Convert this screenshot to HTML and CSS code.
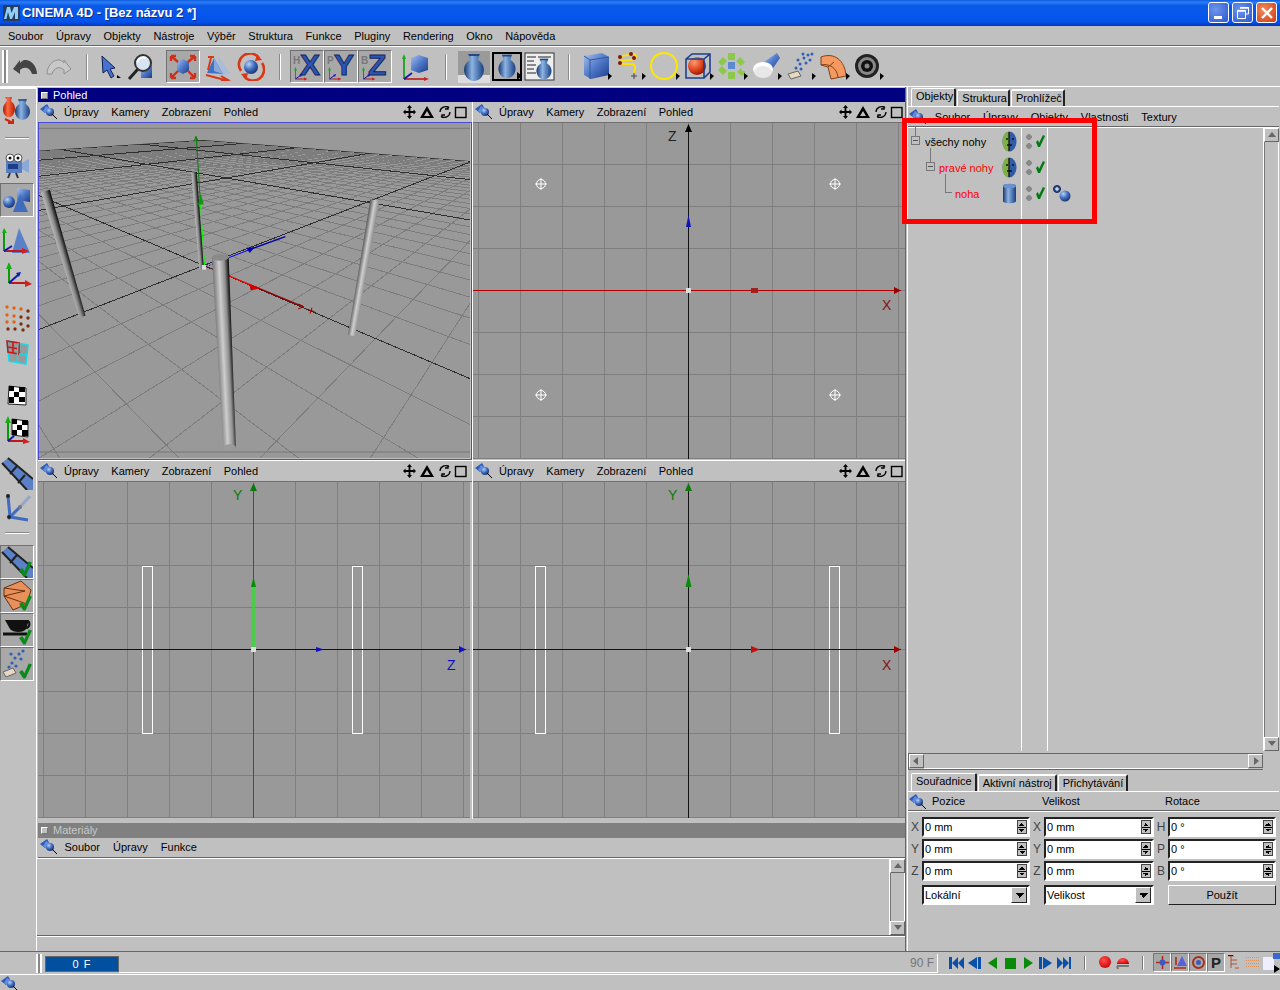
FILE: index.html
```html
<!DOCTYPE html>
<html lang="cs">
<head>
<meta charset="utf-8">
<title>CINEMA 4D - [Bez názvu 2 *]</title>
<link rel="stylesheet" href="styles.css">
</head>
<body>
<svg class="defs" aria-hidden="true">
  <defs>
    <linearGradient id="gBlue" x1="0" y1="0" x2="1" y2="1"><stop offset="0" stop-color="#a8c0ec"/><stop offset=".5" stop-color="#4f78c8"/><stop offset="1" stop-color="#1d3c86"/></linearGradient>
    <linearGradient id="gVase" x1="0" y1="0" x2="1" y2="0"><stop offset="0" stop-color="#16386f"/><stop offset=".4" stop-color="#8db4e4"/><stop offset="1" stop-color="#173f80"/></linearGradient>
    <linearGradient id="gRed" x1="0" y1="0" x2="1" y2="0"><stop offset="0" stop-color="#a81808"/><stop offset=".4" stop-color="#ff6a3c"/><stop offset="1" stop-color="#b01c08"/></linearGradient>
    <radialGradient id="gBall" cx=".35" cy=".3" r=".8"><stop offset="0" stop-color="#b8d0f4"/><stop offset=".5" stop-color="#3f6cc0"/><stop offset="1" stop-color="#12285e"/></radialGradient>
    <radialGradient id="gRedBall" cx=".35" cy=".3" r=".8"><stop offset="0" stop-color="#ff9a70"/><stop offset=".6" stop-color="#d83a14"/><stop offset="1" stop-color="#801004"/></radialGradient>
    <radialGradient id="gRec" cx=".4" cy=".35" r=".7"><stop offset="0" stop-color="#ff5050"/><stop offset="1" stop-color="#d00000"/></radialGradient>
    <linearGradient id="gLegDark" x1="0" y1="0" x2="1" y2="0"><stop offset="0" stop-color="#bdbdbd"/><stop offset=".45" stop-color="#8a8a8a"/><stop offset="1" stop-color="#000"/></linearGradient>
    <linearGradient id="gLegLight" x1="0" y1="0" x2="1" y2="0"><stop offset="0" stop-color="#555"/><stop offset=".5" stop-color="#cfcfcf"/><stop offset="1" stop-color="#8a8a8a"/></linearGradient>
    <linearGradient id="gLegFront" x1="0" y1="0" x2="1" y2="0"><stop offset="0" stop-color="#777"/><stop offset=".4" stop-color="#cdcdcd"/><stop offset=".72" stop-color="#8f8f8f"/><stop offset="1" stop-color="#000"/></linearGradient>
    <pattern id="pGrid" x="215" y="167" width="42" height="42" patternUnits="userSpaceOnUse"><path d="M.5 0V42M0 .5H42" stroke="#7f7f7f" fill="none"/></pattern>

    <symbol id="pin" viewBox="0 0 18 16"><path d="M0 5 7 0 10 5 5 9Z" fill="#2f5bb5"/><path d="M6 2 11 5 7 10 3 7Z" fill="#5f8be0"/><circle cx="10" cy="8" r="4" fill="url(#gBall)"/><path d="M12 10 17 15" stroke="#000"/></symbol>
    <symbol id="vase" viewBox="0 0 26 30"><path d="M7 1H19L17 7C22 10 24 15 23 20 22 25 18 29 13 29 8 29 4 25 3 20 2 15 4 10 9 7Z" fill="url(#gVase)"/><path d="M7 1H19L18 3H8Z" fill="#23497f"/></symbol>
    <symbol id="check" viewBox="0 0 14 16"><path d="M1 9 4 7 6 10 10 1 13 2 7 15H5Z" fill="#0a8a1a"/></symbol>
    <symbol id="checksmall" viewBox="0 0 10 14"><path d="M1 8 3 6 4 9 8 1 10 2 5 13H3Z" fill="#007a10"/></symbol>
    <symbol id="head" viewBox="0 0 15 21"><ellipse cx="7.500" cy="10.500" rx="7" ry="10" fill="#2f5ba8"/><path d="M7 .5C3 .5.5 5 .5 10.500S3 20.500 7 20.500Z" fill="#7fb040"/><path d="M7 1V20M4 8h2M10 8h2M5 14h5" stroke="#111" stroke-width="1.300"/></symbol>
    <symbol id="vpicons" viewBox="0 0 64 14"><path d="M6.500 0 9 3H7.400V6.100H10.500V4.500L13 7 10.500 9.500V7.900H7.400V11H9L6.500 14 4 11H5.600V7.900H2.500V9.500L0 7 2.500 4.500V6.100H5.600V3H4Z" fill="#000"/><path d="M24 1 31 13H17ZM24 6 21 11H27Z" fill="#000" fill-rule="evenodd"/><path d="M37 7A5.500 5.500 0 0 1 46 3M45 1V4H42M47 7A5.500 5.500 0 0 1 38 11M39 13V10H42" stroke="#000" fill="none" stroke-width="1.300"/><rect x="52.500" y="2.500" width="10.500" height="10" fill="none" stroke="#000" stroke-width="1.400"/></symbol>
    <symbol id="ax" viewBox="0 0 28 28"><path d="M4 24V4" stroke="#0a9a0a" stroke-width="2"/><path d="M1 7 4 0 7 7Z" fill="#12b012"/><path d="M4 24H24" stroke="#c01818" stroke-width="2"/><path d="M21 21 28 24 21 27Z" fill="#d02020"/><path d="M4 24 14 17" stroke="#0a1ab0" stroke-width="2"/><path d="M11 16 17 14 15 20Z" fill="#0a1ab0"/></symbol>
  </defs>
</svg>
<div class="app">
  <header class="titlebar">
    <svg class="logo" width="17" height="16" viewBox="0 0 17 16"><rect width="17" height="16" fill="#2a3a5a"/><path d="M1 14 4 2H7L8.500 8 11 2H15V14H12V7L9 14H7L5 7 3.500 14Z" fill="#8ed0f8"/></svg>
    <span class="title-text">CINEMA 4D - [Bez názvu 2 *]</span>
    <div class="winbtns">
      <div class="winbtn"><svg width="18" height="18" viewBox="0 0 18 18"><rect x="4" y="12" width="8" height="3" fill="#fff"/></svg></div>
      <div class="winbtn"><svg width="18" height="18" viewBox="0 0 18 18"><path d="M6.500 3.500H14.500V10H12M3.500 6.500H11.500V14.500H3.500Z" fill="none" stroke="#fff"/><path d="M6 4H15M3 7H12" stroke="#fff" stroke-width="1.500"/></svg></div>
      <div class="winbtn close"><svg width="18" height="18" viewBox="0 0 18 18"><path d="M4 4 14 14M14 4 4 14" stroke="#fff" stroke-width="2.400"/></svg></div>
    </div>
  </header>
  <nav class="menubar">
    <span>Soubor</span><span>Úpravy</span><span>Objekty</span><span>Nástroje</span><span>Výběr</span><span>Struktura</span><span>Funkce</span><span>Pluginy</span><span>Rendering</span><span>Okno</span><span>Nápověda</span>
  </nav>
  <div class="toolbar">
    <div class="grip"></div>
    <div class="t"><svg width="26" height="20" viewBox="0 0 26 20"><path d="M1 12 8 17V13C12 9 18 10 20 17H25C25 8 18 2 12 3 10 4 9 5 8 6V3Z" fill="#444"/></svg></div>
    <div class="t"><svg width="26" height="20" viewBox="0 0 26 20"><path d="M25 12 18 17V13C14 9 8 10 6 17H1C1 8 8 2 14 3 16 4 17 5 18 6V3Z" fill="#c8c8c8" stroke="#8f8f8f"/></svg></div>
    <div class="sep w20"></div>
    <div class="t w30"><svg class="more" width="20" height="24" viewBox="0 0 20 24"><path d="M1 1 14 13 9 14 13 21 10 23 6 15 2 18Z" fill="#4472d8" stroke="#10204a"/><path d="M16 20 20 23H16Z" fill="#000"/></svg></div>
    <div class="t w30"><svg width="28" height="28" viewBox="0 0 28 28"><path d="M14 12 25 12V25H14Z" fill="url(#gBlue)"/><path d="M11 16 2 26" stroke="#222" stroke-width="3"/><circle cx="16" cy="10" r="8" fill="#d8e4f4" stroke="#333" stroke-width="2"/><path d="M10 9C12 5 16 4 19 5" stroke="#fff" stroke-width="2" fill="none"/></svg></div>
    <div class="blank w10"></div>
    <div class="t on"><svg width="30" height="28" viewBox="0 0 30 28"><path d="M9 9 15 6 21 9V18L15 21 9 18Z" fill="url(#gBlue)"/><path d="M10 9 3 3M3 3H8M3 3V8M20 9 27 3M27 3H22M27 3V8M10 18 3 25M3 25H8M3 25V20M20 18 27 25M27 25H22M27 25V20" stroke="#d03018" stroke-width="2.400" fill="none"/></svg></div>
    <div class="t"><svg width="28" height="28" viewBox="0 0 28 28"><path d="M15 3 27 20 16 24Z" fill="#a9bcd8"/><path d="M11 5 20 21 4 20Z" fill="#3f72c4"/><path d="M11 5 20 21 11 18Z" fill="#88a8dc"/><path d="M5 17 8 5M5 4H11M3 22 22 27M18 23 25 27 18 28" stroke="#d83818" stroke-width="2" fill="none"/></svg></div>
    <div class="t"><svg width="28" height="28" viewBox="0 0 28 28"><circle cx="14" cy="14" r="7" fill="url(#gBall)"/><path d="M4 18A11 11 0 0 1 22 5M25 10A11 11 0 0 1 7 23" stroke="#d83818" stroke-width="2.600" fill="none"/><path d="M20 1 25 7 18 8ZM9 27 4 21 11 20Z" fill="#d83818"/></svg></div>
    <div class="sep w22"></div>
    <div class="t on axisbtn"><span class="mini">H</span><span class="big">X</span><svg class="axmini" width="15" height="14" viewBox="0 0 28 28"><use href="#ax"/></svg></div>
    <div class="t on axisbtn"><span class="mini">P</span><span class="big">Y</span><svg class="axmini" width="15" height="14" viewBox="0 0 28 28"><use href="#ax"/></svg></div>
    <div class="t on axisbtn"><span class="mini">B</span><span class="big">Z</span><svg class="axmini" width="15" height="14" viewBox="0 0 28 28"><use href="#ax"/></svg></div>
    <div class="blank w6"></div>
    <div class="t"><svg width="30" height="30" viewBox="0 0 30 30"><path d="M11 6 19 3 28 6V18L19 21 11 18Z" fill="url(#gBlue)"/><path d="M4 27V5" stroke="#0a9a0a" stroke-width="1.600"/><path d="M2 7 4 2 6 7Z" fill="#12b012"/><path d="M4 27H26" stroke="#c01818" stroke-width="1.600"/><path d="M24 25 29 27 24 29Z" fill="#d02020"/><path d="M4 27 12 21" stroke="#0a1ab0" stroke-width="1.600"/></svg></div>
    <div class="sep w26"></div>
    <div class="t w32"><svg class="vase-on" width="32" height="32" viewBox="0 0 32 32"><rect width="32" height="32" fill="#9a9a9a"/><rect y="24" width="32" height="8" fill="#ddd"/><use href="#vase" x="3" y="2" width="26" height="29"/></svg></div>
    <div class="t w33"><svg width="30" height="29" viewBox="0 0 30 29"><rect x="1" y="1" width="28" height="27" fill="#b0b0b0" stroke="#000" stroke-width="2"/><use href="#vase" x="3" y="2" width="24" height="25"/><path d="M25 20 30 24 25 28Z" fill="#000"/></svg></div>
    <div class="t w33"><svg width="31" height="29" viewBox="0 0 31 29"><rect x="1" y="1" width="29" height="27" fill="#eee" stroke="#333"/><path d="M3 5H12M3 9H10M3 13H12M3 17H10M3 21H12M14 5H27" stroke="#222"/><use href="#vase" x="10" y="6" width="20" height="22"/></svg></div>
    <div class="sep w24"></div>
    <div class="t"><svg width="30" height="29" viewBox="0 0 30 29"><path d="M2 4 20 1 27 5V23L9 27 2 23Z" fill="url(#gBlue)"/><path d="M2 4 8 8 27 5M8 8V27" stroke="#33599e" fill="none"/><path d="M26 21 30 24 26 28Z" fill="#000"/></svg></div>
    <div class="t"><svg width="30" height="29" viewBox="0 0 30 29"><path d="M3 5C10 2 15 4 18 2 22 3 20 7 15 8 10 9 5 8 4 10 3 12 8 12 14 12 20 12 20 16 18 21" stroke="#ffe000" stroke-width="2" fill="none"/><circle cx="4" cy="5" r="2" fill="#801808"/><circle cx="15" cy="2" r="2" fill="#801808"/><circle cx="18" cy="6" r="2" fill="#801808"/><circle cx="4" cy="11" r="2" fill="#801808"/><path d="M18 21V27M15 24H21" stroke="#444"/><path d="M26 21 30 24 26 28Z" fill="#000"/></svg></div>
    <div class="t"><svg width="30" height="29" viewBox="0 0 30 29"><circle cx="14" cy="14" r="13" fill="none" stroke="#ffe600" stroke-width="2"/><path d="M26 21 30 24 26 28Z" fill="#000"/></svg></div>
    <div class="t"><svg width="30" height="29" viewBox="0 0 30 29"><circle cx="13" cy="14" r="9" fill="url(#gRedBall)"/><path d="M2 7 8 2H26V20L20 26H2ZM2 7H20V26M20 7 26 2" fill="none" stroke="#1c3f8c" stroke-width="1.600"/><path d="M26 21 30 24 26 28Z" fill="#000"/></svg></div>
    <div class="t"><svg width="30" height="29" viewBox="0 0 30 29"><path d="M10 1H17V8H10ZM10 20H17V27H10ZM0 10 5 5 9 9 4 14ZM18 9 22 5 27 10 23 14ZM0 18 4 14 9 19 5 23Z" fill="#8cc84a"/><rect x="10" y="10" width="7" height="7" fill="#5a8ad0"/><path d="M19 20 23 16 24 19H27V22L24 24Z" fill="#8cc84a"/><path d="M26 21 30 24 26 28Z" fill="#000"/></svg></div>
    <div class="t"><svg width="30" height="29" viewBox="0 0 30 29"><path d="M12 10 25 1 28 6 19 19Z" fill="url(#gBlue)"/><ellipse cx="11" cy="17" rx="10" ry="7" fill="#fff"/><ellipse cx="11" cy="20" rx="9" ry="6" fill="#e8e8e8"/><path d="M26 21 30 24 26 28Z" fill="#000"/></svg></div>
    <div class="t"><svg width="30" height="29" viewBox="0 0 30 29"><path d="M2 22 12 19 15 24 5 27Z" fill="#e8d8c0" stroke="#666"/><g fill="#2f5fb8"><circle cx="10" cy="16" r="1.500"/><circle cx="14" cy="12" r="1.500"/><circle cx="18" cy="6" r="1.500"/><circle cx="22" cy="3" r="1.500"/><circle cx="12" cy="8" r="1.500"/><circle cx="20" cy="11" r="1.500"/><circle cx="24" cy="8" r="1.500"/><circle cx="15" cy="17" r="1.500"/><circle cx="26" cy="2" r="1.500"/><circle cx="17" cy="2" r="1.500"/></g><path d="M26 21 30 24 26 28Z" fill="#000"/></svg></div>
    <div class="t"><svg width="30" height="29" viewBox="0 0 30 29"><path d="M1 5C14 0 25 8 26 24L11 27 8 15 1 13Z" fill="#f49a60" stroke="#804018"/><path d="M1 13C9 11 17 16 18 25M8 15 14 10" stroke="#804018" fill="none"/><path d="M26 21 30 24 26 28Z" fill="#000"/></svg></div>
    <div class="t"><svg width="30" height="29" viewBox="0 0 30 29"><circle cx="13" cy="14" r="12" fill="#222"/><circle cx="13" cy="14" r="9" fill="#888"/><circle cx="13" cy="14" r="6" fill="#111"/><circle cx="13" cy="14" r="2.500" fill="#888"/><path d="M26 21 30 24 26 28Z" fill="#000"/></svg></div>
  </div>
  <main class="workspace">
    <aside class="lefttools">
      <div class="lt"><svg width="30" height="30" viewBox="0 0 30 30"><path d="M3 2H10L9 6C13 9 14 14 12 18 11 22 7 23 5 22 1 20 0 14 2 10 4 7 5 6 5 5Z" fill="url(#gRed)"/><use href="#vase" x="11" y="2" width="19" height="25"/><path d="M3 24 11 28M11 24V28H6" stroke="#c82810" stroke-width="2" fill="none"/></svg></div>
      <div class="lsep"></div>
      <div class="lt"><svg width="26" height="26" viewBox="0 0 26 26"><rect x="2" y="6" width="16" height="14" fill="#5a7ec0"/><rect x="4" y="11" width="10" height="5" fill="#1c3f8c"/><path d="M18 10 25 6V20L18 16Z" fill="#8aa8d8"/><circle cx="6" cy="5" r="4" fill="#fff" stroke="#555"/><circle cx="14" cy="5" r="4" fill="#fff" stroke="#555"/><circle cx="6" cy="5" r="1.500"/><circle cx="14" cy="5" r="1.500"/><path d="M6 20 4 25M12 20 14 25" stroke="#333" stroke-width="2"/></svg></div>
      <div class="lt on"><svg width="30" height="28" viewBox="0 0 30 28"><circle cx="7" cy="16" r="6" fill="url(#gBall)"/><path d="M15 2 28 4V16L15 14Z" fill="url(#gBlue)"/><path d="M18 8 26 26H11Z" fill="#3f6cbc"/></svg></div>
      <div class="lt mt8"><svg width="30" height="30" viewBox="0 0 30 30"><path d="M17 1 28 26H10Z" fill="#5a80c8"/><path d="M2 24V3" stroke="#0a9a0a" stroke-width="2"/><path d="M0 6 2 1 5 6Z" fill="#12b012"/><path d="M2 24H22" stroke="#c01818" stroke-width="2"/><path d="M20 21 27 24 20 27Z" fill="#d02020"/><path d="M2 24 10 19" stroke="#0a1ab0" stroke-width="2"/></svg></div>
      <div class="lt"><svg width="32" height="30" viewBox="0 0 32 30"><path d="M8 22V6" stroke="#0a9a0a" stroke-width="2"/><path d="M5 8 8 1 11 8Z" fill="#12b012"/><path d="M8 22H26" stroke="#c01818" stroke-width="2"/><path d="M24 19 31 23 24 26Z" fill="#d02020"/><path d="M8 22 17 14" stroke="#0a1ab0" stroke-width="2"/><path d="M15 12 20 11 18 16Z" fill="#0a1ab0"/></svg></div>
      <div class="lt mt8"><svg width="26" height="28" viewBox="0 0 26 28" fill="#e86010"><circle cx="3" cy="3" r="1.700"/><circle cx="10" cy="4" r="1.700"/><circle cx="17" cy="5" r="1.700"/><circle cx="3" cy="11" r="1.700"/><circle cx="10" cy="12" r="1.700"/><circle cx="3" cy="18" r="1.700"/><circle cx="10" cy="18" r="1.700"/><g fill="#7a3008"><circle cx="24" cy="7" r="1.700"/><circle cx="17" cy="13" r="1.700"/><circle cx="24" cy="14" r="1.700"/><circle cx="17" cy="20" r="1.700"/><circle cx="24" cy="22" r="1.700"/><circle cx="4" cy="25" r="1.700"/><circle cx="11" cy="25" r="1.700"/><circle cx="19" cy="26" r="1.700"/></g></svg></div>
      <div class="lt"><svg width="24" height="26" viewBox="0 0 24 26"><path d="M2 2 23 6 21 25 4 22Z" fill="#999" stroke="#19d8e8" stroke-width="1.500"/><path d="M2 2 14 4 14 15 3 13ZM8 3V14M3 8 14 10" fill="none" stroke="#c81818" stroke-width="1.600"/><path d="M14 15 22 16M13 4 12 23" stroke="#19d8e8" stroke-width="1.300"/></svg></div>
      <div class="lt mt10"><svg width="22" height="22" viewBox="0 0 22 22"><path d="M3 1 20 3 20 20 2 19Z" fill="#fff" stroke="#222"/><path d="M3 1H8V6H3ZM13 2H19V7H13ZM8 7H13V12H8ZM3 12H8V18H3ZM13 12H19V17H13Z" fill="#000"/></svg></div>
      <div class="lt"><svg width="26" height="30" viewBox="0 0 26 30"><path d="M8 4 24 6 24 22 8 20Z" fill="#fff" stroke="#222"/><path d="M8 4H13V9H8ZM18 5H24V10H18ZM13 10H18V15H13ZM8 15H13V20H8ZM18 15H24V21H18Z" fill="#000"/><path d="M4 26V6" stroke="#0a9a0a" stroke-width="2"/><path d="M1 8 4 1 7 8Z" fill="#12b012"/><path d="M4 26H21" stroke="#c01818" stroke-width="2"/><path d="M19 23 26 27 19 29Z" fill="#d02020"/><path d="M4 26 10 21" stroke="#0a1ab0" stroke-width="2"/></svg></div>
      <div class="lt mt9"><svg width="32" height="33" viewBox="0 0 32 33"><path d="M1 6 7 1 32 22V33H26Z" fill="#5a80c8"/><path d="M1 6 26 33M7 1 32 22M9 17 16 9M17 26 24 18" stroke="#222" stroke-width="2" fill="none"/></svg></div>
      <div class="lt"><svg width="28" height="30" viewBox="0 0 28 30"><path d="M17 15 27 4" stroke="#95a8c8" stroke-width="3"/><path d="M5 4 7 25 17 15" stroke="#3f6cc0" stroke-width="3" fill="none"/><path d="M7 25 25 28" stroke="#3f6cc0" stroke-width="3"/><circle cx="5" cy="4" r="2" fill="#222"/><circle cx="6" cy="25" r="2" fill="#222"/><circle cx="17" cy="15" r="2" fill="#777"/></svg></div>
      <div class="lsep short"></div>
      <div class="lt chk"><svg width="32" height="32" viewBox="0 0 32 32"><path d="M1 6 7 1 32 22V32H26Z" fill="#5a80c8"/><path d="M1 6 26 32M7 1 32 22M9 17 16 9" stroke="#222" stroke-width="2" fill="none"/><use href="#check" x="17" y="14" width="15" height="18"/></svg></div>
      <div class="lt chk"><svg width="32" height="32" viewBox="0 0 32 32"><path d="M3 8 20 1 30 10 26 24 12 30 3 16Z" fill="#e8905a" stroke="#6a3010"/><path d="M3 8 24 11 3 16 26 24" stroke="#6a3010" fill="none"/><use href="#check" x="17" y="14" width="15" height="18"/></svg></div>
      <div class="lt chk"><svg width="32" height="32" viewBox="0 0 32 32"><path d="M4 6H28L25 15C23 19 12 19 9 15Z" fill="#111"/><path d="M27 7A4 4 0 0 1 25 14" stroke="#111" stroke-width="2" fill="none"/><path d="M2 20H26" stroke="#111" stroke-width="3"/><use href="#check" x="17" y="14" width="15" height="18"/></svg></div>
      <div class="lt chk"><svg width="32" height="32" viewBox="0 0 32 32"><path d="M2 24 12 20 15 25 5 29Z" fill="#e8d8c0" stroke="#666"/><g fill="#2f5fb8"><circle cx="11" cy="15" r="1.600"/><circle cx="14" cy="10" r="1.600"/><circle cx="18" cy="6" r="1.600"/><circle cx="22" cy="3" r="1.600"/><circle cx="10" cy="6" r="1.600"/><circle cx="20" cy="11" r="1.600"/><circle cx="15" cy="18" r="1.600"/><circle cx="8" cy="19" r="1.600"/></g><use href="#check" x="17" y="14" width="15" height="18"/></svg></div>
    </aside>
    <section class="center">
      <div class="panetitle"><i class="sq"></i>Pohled</div>
      <div class="vpgrid">
        <article class="vp">
          <div class="vmenu"><svg class="pinic" width="18" height="16"><use href="#pin"/></svg><span>Úpravy</span><span>Kamery</span><span>Zobrazení</span><span>Pohled</span><svg class="vicons" width="64" height="14"><use href="#vpicons"/></svg></div>
          <div class="canvas active">
            <svg width="432" height="335" viewBox="0 -6 1296 1005" class="cv">
              <defs><clipPath id="floorClip"><path d="M0 77 495 45 1296 108V1005H0Z"/></clipPath></defs>
              <rect y="-6" width="1296" height="1011" fill="#999"/>
              <g clip-path="url(#floorClip)" fill="none" shape-rendering="crispEdges">
                <path id="gridMinor" stroke="#7d7d7d" stroke-width="3"/>
                <path id="gridMajor" stroke="#2e2e2e" stroke-width="3"/>
              </g>
              <path d="M0 10H1296M0 981H1296" stroke="#777" stroke-width="3"/>
              <g transform="translate(22 198) rotate(-16.400)"><path d="M-14 0H14L10 393H-10Z" fill="url(#gLegDark)"/></g>
              <g transform="translate(468 142) rotate(-4.500)"><path d="M-8 0H8L7 291H-7Z" fill="url(#gLegDark)"/></g>
              <g transform="translate(1011 225) rotate(9.800)"><path d="M-14 0H14L11 413H-11Z" fill="url(#gLegLight)"/></g>
              <path d="M500 425 487 232" stroke="#00ff00" stroke-width="3" stroke-dasharray="16 3"/>
              <path d="M487 232 475 38" stroke="#0a7a0a" stroke-width="3"/>
              <path d="M480 240 488 205 497 238Z" fill="#0a9a0a"/>
              <path d="M468 50 474 34 481 50" stroke="#0a7a0a" stroke-width="3" fill="none"/>
              <path d="M505 425 575 397" stroke="#0000ff" stroke-width="3" stroke-dasharray="4 5"/>
              <path d="M575 397 640 372" stroke="#0000ff" stroke-width="3"/>
              <path d="M640 372 742 335" stroke="#0000a0" stroke-width="4"/>
              <path d="M625 368 650 367 635 384Z" fill="#0000b0"/>
              <path d="M505 425 575 450" stroke="#a00" stroke-width="3" stroke-dasharray="4 5"/>
              <path d="M560 447 650 485" stroke="#f00" stroke-width="4"/>
              <path d="M650 485 795 545" stroke="#900" stroke-width="4"/>
              <path d="M634 476 668 490 638 496Z" fill="#d00000"/>
              <path d="M780 552 797 545 782 537M804 552 830 560M822 548 816 566" stroke="#900" stroke-width="3" fill="none"/>
              <rect x="492" y="420" width="12" height="14" fill="#ddd"/>
              <g transform="translate(547 397) rotate(-2.800)"><path d="M-25 0H25L19 574H-19Z" fill="url(#gLegFront)"/></g>
              <ellipse cx="547" cy="397" rx="25" ry="10" fill="#8a8a8a"/>
              <ellipse cx="575" cy="968" rx="19" ry="10" fill="#9a9a9a"/>
            </svg>
          </div>
        </article>
        <article class="vp">
          <div class="vmenu"><svg class="pinic" width="18" height="16"><use href="#pin"/></svg><span>Úpravy</span><span>Kamery</span><span>Zobrazení</span><span>Pohled</span><svg class="vicons" width="64" height="14"><use href="#vpicons"/></svg></div>
          <div class="canvas">
            <svg width="432" height="336" viewBox="0 0 432 336" class="cv">
              <rect width="432" height="336" fill="#999"/><rect width="432" height="336" fill="url(#pGrid)"/>
              <g class="mk" fill="none" stroke="#fff"><circle cx="68" cy="61" r="4.500"/><path d="M62 61H74M68 55V67"/><circle cx="362" cy="61" r="4.500"/><path d="M356 61H368M362 55V67"/><circle cx="68" cy="272" r="4.500"/><path d="M62 272H74M68 266V278"/><circle cx="362" cy="272" r="4.500"/><path d="M356 272H368M362 266V278"/></g>
              <path d="M215.500 4V336" stroke="#111"/><path d="M0 167.500H428" stroke="#b00000"/>
              <path d="M212 9 215.500 1 219 9Z" fill="#000"/><path d="M213 104 215.500 92 218 104Z" fill="#1010c0"/><path d="M278 165H285V170H278Z" fill="#a02020"/><path d="M421 164 428 167.500 421 171Z" fill="#900"/>
              <rect x="213" y="165" width="5" height="5" fill="#ddd"/>
              <text x="195" y="18" class="axlabel">Z</text><text x="409" y="187" class="axlabel xl">X</text>
            </svg>
          </div>
        </article>
        <article class="vp">
          <div class="vmenu"><svg class="pinic" width="18" height="16"><use href="#pin"/></svg><span>Úpravy</span><span>Kamery</span><span>Zobrazení</span><span>Pohled</span><svg class="vicons" width="64" height="14"><use href="#vpicons"/></svg></div>
          <div class="canvas">
            <svg width="432" height="336" viewBox="0 0 432 336" class="cv">
              <rect width="432" height="336" fill="#999"/><rect width="432" height="336" fill="url(#pGrid)"/>
              <rect x="104.500" y="84.500" width="10" height="167" fill="none" stroke="#fff"/><rect x="314.500" y="84.500" width="10" height="167" fill="none" stroke="#fff"/>
              <path d="M215.500 4V336" stroke="#0a7a0a"/><path d="M215.500 100V167" stroke="#00ff00" stroke-width="2"/><path d="M0 167.500H428" stroke="#111"/>
              <path d="M212 9 215.500 1 219 9Z" fill="#0a7a0a"/><path d="M213 105 215.500 95 218 105Z" fill="#0a8a0a"/><path d="M278 165 286 167.500 278 170Z" fill="#1010c0"/><path d="M421 164 428 167.500 421 171Z" fill="#1010c0"/>
              <rect x="213" y="165" width="5" height="5" fill="#ddd"/>
              <text x="195" y="18" class="axlabel yl">Y</text><text x="409" y="188" class="axlabel zl">Z</text>
            </svg>
          </div>
        </article>
        <article class="vp">
          <div class="vmenu"><svg class="pinic" width="18" height="16"><use href="#pin"/></svg><span>Úpravy</span><span>Kamery</span><span>Zobrazení</span><span>Pohled</span><svg class="vicons" width="64" height="14"><use href="#vpicons"/></svg></div>
          <div class="canvas">
            <svg width="432" height="336" viewBox="0 0 432 336" class="cv">
              <rect width="432" height="336" fill="#999"/><rect width="432" height="336" fill="url(#pGrid)"/>
              <rect x="62.500" y="84.500" width="10" height="167" fill="none" stroke="#fff"/><rect x="356.500" y="84.500" width="10" height="167" fill="none" stroke="#fff"/>
              <path d="M215.500 4V336" stroke="#111"/><path d="M0 167.500H428" stroke="#111"/>
              <path d="M212 9 215.500 1 219 9Z" fill="#0a7a0a"/><path d="M212.500 105 215.500 92 218.500 105Z" fill="#0a8a0a"/><path d="M278 164 287 167.500 278 171Z" fill="#c01010"/><path d="M421 164 428 167.500 421 171Z" fill="#900"/>
              <rect x="213" y="165" width="5" height="5" fill="#ddd"/>
              <text x="195" y="18" class="axlabel yl">Y</text><text x="409" y="188" class="axlabel xl">X</text>
            </svg>
          </div>
        </article>
      </div>
      <div class="panetitle inactive"><i class="sq"></i>Materiály</div>
      <div class="submenu matmenu"><svg class="pinic" width="18" height="16"><use href="#pin"/></svg><span>Soubor</span><span>Úpravy</span><span>Funkce</span></div>
      <div class="matarea">
        <div class="vscroll small"><b class="sb up"></b><div class="track"></div><b class="sb down"></b></div>
      </div>
      <div class="matfoot"></div>
    </section>
    <aside class="rightpanel">
      <div class="tabs"><span class="tab act">Objekty</span><span class="tab">Struktura</span><span class="tab">Prohlížeč</span></div>
      <div class="submenu omenu"><svg class="pinic" width="18" height="16"><use href="#pin"/></svg><span>Soubor</span><span>Úpravy</span><span>Objekty</span><span>Vlastnosti</span><span>Textury</span></div>
      <div class="objarea">
        <div class="treewrap">
          <div class="col-names">
            <div class="row r1"><i class="tl v1"></i><i class="plus"></i><span>všechy nohy</span><svg class="oi" width="15" height="21"><use href="#head"/></svg></div>
            <div class="row r2"><i class="tl v2"></i><i class="plus"></i><span class="red">pravé nohy</span><svg class="oi" width="15" height="21"><use href="#head"/></svg></div>
            <div class="row r3"><i class="tl v3"></i><span class="red">noha</span><svg class="oi" width="15" height="21" viewBox="0 0 15 21"><path d="M1 3C1 0 14 0 14 3V18C14 21 1 21 1 18Z" fill="url(#gVase)"/><ellipse cx="7.500" cy="3" rx="6.500" ry="2.300" fill="#6a92d0"/></svg></div>
          </div>
          <div class="col-flags">
            <div class="flag"><i class="dots"></i><svg width="10" height="14"><use href="#checksmall"/></svg></div>
            <div class="flag"><i class="dots"></i><svg width="10" height="14"><use href="#checksmall"/></svg></div>
            <div class="flag"><i class="dots"></i><svg width="10" height="14"><use href="#checksmall"/></svg></div>
          </div>
          <div class="col-tags">
            <svg class="tag" width="20" height="18" viewBox="0 0 20 18"><circle cx="5" cy="4" r="3.500" fill="#2f4f98" stroke="#11244f"/><path d="M3 4H7M5 2V6" stroke="#fff"/><circle cx="13" cy="11" r="5.500" fill="url(#gBall)"/></svg>
          </div>
        </div>
        <div class="vscroll"><b class="sb up"></b><div class="track"></div><b class="sb down"></b></div>
        <div class="redbox"></div>
      </div>
      <div class="hscroll"><b class="sb left"></b><div class="htrack"></div><b class="sb right"></b></div>
      <div class="tabs low"><span class="tab act">Souřadnice</span><span class="tab">Aktivní nástroj</span><span class="tab">Přichytávání</span></div>
      <div class="coordhead"><svg class="pinic" width="18" height="16"><use href="#pin"/></svg><span class="c1">Pozice</span><span class="c2">Velikost</span><span class="c3">Rotace</span></div>
      <div class="coordgrid">
        <label>X</label><div class="num">0 mm<i class="spin"></i></div><label>X</label><div class="num">0 mm<i class="spin"></i></div><label>H</label><div class="num">0 °<i class="spin"></i></div>
        <label>Y</label><div class="num">0 mm<i class="spin"></i></div><label>Y</label><div class="num">0 mm<i class="spin"></i></div><label>P</label><div class="num">0 °<i class="spin"></i></div>
        <label>Z</label><div class="num">0 mm<i class="spin"></i></div><label>Z</label><div class="num">0 mm<i class="spin"></i></div><label>B</label><div class="num">0 °<i class="spin"></i></div>
        <span></span><div class="num sel lastrow">Lokální<i class="drop"></i></div><span></span><div class="num sel lastrow">Velikost<i class="drop"></i></div><span></span><div class="apply lastrow">Použít</div>
      </div>
    </aside>
  </main>
  <div class="timeline">
    <div class="grip tl-grip"></div>
    <div class="frame-now">0 F</div>
    <div class="slider"><span class="frame-end">90 F</span></div>
    <div class="transport">
      <svg width="122" height="14" viewBox="0 0 122 14" fill="#0a50a8"><path d="M0 1H3V13H0ZM9 1V13L3 7ZM15 1V13L9 7Z"/><path d="M19 7 28 1V13ZM29 1H32V13H29Z"/><path d="M39 7 48 1V13Z" fill="#0a8a0a"/><rect x="56" y="2" width="11" height="11" fill="#0a8a0a"/><path d="M75 1 84 7 75 13Z" fill="#0a8a0a"/><path d="M90 1H93V13H90ZM94 1 103 7 94 13Z"/><path d="M108 1 114 7 108 13ZM114 1 120 7 114 13ZM120 1H122V13H120Z"/></svg>
      <div class="tsep"></div>
      <svg width="32" height="15" viewBox="0 0 32 15"><circle cx="6" cy="7" r="6" fill="url(#gRec)"/><path d="M18 9A6 6 0 0 1 30 9Z" fill="url(#gRec)"/><path d="M18 11H30M18 11 19 14" stroke="#777" stroke-width="2" fill="none"/></svg>
      <div class="tsep s2"></div>
      <div class="mbtn"><svg width="15" height="15" viewBox="0 0 15 15"><path d="M7.500 1V14M1 7.500H14" stroke="#b02a18" stroke-width="1.600"/><circle cx="7.500" cy="7.500" r="3" fill="#3f58c0"/></svg></div>
      <div class="mbtn"><svg width="15" height="15" viewBox="0 0 15 15"><path d="M9 1 14 11H4Z" fill="#5a60d8"/><path d="M3 2V10M1 13H13" stroke="#b02a18" stroke-width="1.600"/></svg></div>
      <div class="mbtn"><svg width="15" height="15" viewBox="0 0 15 15"><circle cx="7.500" cy="7.500" r="5.500" fill="none" stroke="#a83018" stroke-width="2"/><circle cx="7.500" cy="7.500" r="2.500" fill="#3f58c0"/></svg></div>
      <div class="mbtn pbtn">P</div>
      <svg class="mini1" width="16" height="16" viewBox="0 0 16 16"><path d="M1 1H7M4 1V13M4 5H10M4 9H10M8 13H12" stroke="#aa5533" fill="none"/><path d="M1 .500H6" stroke="#222"/></svg>
      <svg class="mini2" width="14" height="13" viewBox="0 0 14 13" fill="none" stroke="#e09050" stroke-dasharray="1 1"><path d="M0 1.500H14M0 4.500H14M0 7.500H14M0 10.500H14"/></svg>
      <svg class="mini3" width="18" height="20" viewBox="0 0 18 20"><path d="M1 4H10L12 6V17H1Z" fill="#eef"/><rect x="11" y="0" width="7" height="6" fill="#3a68d0"/><path d="M12 12 18 16 12 20Z" fill="#000"/></svg>
    </div>
  </div>
  <footer class="statusbar"><svg width="18" height="16"><use href="#pin"/></svg></footer>
</div>
<script src="grid.js"></script>
</body>
</html>
```
FILE: styles.css
```css
* { box-sizing: border-box; }
html, body { margin: 0; padding: 0; }
body { width: 1280px; height: 990px; overflow: hidden; background: #c0c0c0; font: 11px/14px "Liberation Sans", Arial, sans-serif; color: #000; }
.defs { position: absolute; width: 0; height: 0; }
svg { display: block; flex: none; }
.app { width: 1280px; height: 990px; display: flex; flex-direction: column; }

.titlebar { height: 26px; display: flex; align-items: center; padding: 0 2px 1px 3px; color: #fff; background: linear-gradient(180deg, #0a5ce0 0, #2d7df6 8%, #0a5ae6 22%, #0656ee 60%, #0351e8 85%, #0036b8 100%); }
.logo { margin-right: 2px; }
.title-text { font: bold 13px/16px "Liberation Sans", Arial, sans-serif; text-shadow: 1px 1px 0 #0a2a90; }
.winbtns { margin-left: auto; display: flex; gap: 3px; padding-right: 1px; }
.winbtn { width: 21px; height: 21px; border: 1px solid #fff; border-radius: 3px; background: radial-gradient(circle at 35% 35%, #6f95ec, #2a58d0); display: flex; align-items: center; justify-content: center; }
.winbtn.close { background: radial-gradient(circle at 35% 35%, #f08a60, #d03c10); }

.menubar { height: 20px; display: flex; align-items: center; gap: 12.6px; padding: 0 0 0 8px; border-bottom: 1px solid #666; }
.toolbar { height: 41px; display: flex; align-items: center; border-top: 1px solid #fff; border-bottom: 1px solid #fff; }
.grip { width: 6px; height: 33px; margin-left: 2px; border-left: 2px solid #fff; border-right: 2px solid #fff; background: #888; background-clip: content-box; }
.t { width: 34px; height: 33px; display: flex; align-items: center; justify-content: center; flex: none; position: relative; }
.t.w30 { width: 30px; } .t.w32 { width: 32px; } .t.w33 { width: 33px; }
.t.on, .lt.on, .lt.chk { background: #a8a8a8; border: 1px solid; border-color: #707070 #fff #fff #707070; }
.sep { height: 26px; flex: none; position: relative; }
.sep::after { content: ""; position: absolute; left: 50%; top: 0; bottom: 0; width: 2px; background: linear-gradient(90deg, #8a8a8a 50%, #fff 50%); }
.w20 { width: 20px; } .w22 { width: 22px; } .w24 { width: 24px; } .w26 { width: 26px; }
.blank { flex: none; height: 10px; }
.w10 { width: 10px; } .w6 { width: 6px; }
.big { position: absolute; left: 9px; top: 0; font: bold 30px/27px "Liberation Sans", Arial, sans-serif; color: #2d55b4; -webkit-text-stroke: 1px #14285c; }
.mini { position: absolute; left: 2px; top: 4px; font: bold 10px/12px "Liberation Sans", Arial, sans-serif; color: #777; }
.axmini { position: absolute; left: 2px; bottom: 1px; }

.workspace { flex: 1; min-height: 0; display: flex; }
.lefttools { width: 36px; flex: none; display: flex; flex-direction: column; align-items: flex-start; padding-top: 6px; }
.lefttools::before { content: ""; width: 36px; height: 2px; flex: none; margin-top: -6px; margin-bottom: 4px; background: #fff; }
.lt { width: 34px; height: 34px; flex: none; display: flex; align-items: center; justify-content: center; }
.lsep { width: 24px; height: 2px; margin: 10px 5px 10px; flex: none; background: linear-gradient(#888 50%, #fff 50%); }
.lsep.short { margin: 8px 5px 11px; }
.lt.mt8 { margin-top: 8px; } .lt.mt10 { margin-top: 10px; } .lt.mt9 { margin-top: 9px; }

.center { width: 870px; flex: none; display: flex; flex-direction: column; padding-top: 1px; border-left: 1px solid #fff; border-right: 1px solid #666; }
.panetitle { height: 14px; margin-left: 1px; background: #000080; color: #fff; display: flex; align-items: center; padding-left: 3px; flex: none; }
.panetitle.inactive { height: 15px; background: #808080; color: #c8c8c8; margin-top: 4px; padding-bottom: 1px; }
.sq { width: 7px; height: 7px; margin-right: 5px; background: #c0c0c0; border: 1px solid; border-color: #fff #777 #777 #fff; }
.vpgrid { flex: none; display: grid; grid-template-columns: 435px 433px; grid-template-rows: 358px 359px; }
.vp { display: flex; flex-direction: column; border-left: 1px solid #c0c0c0; min-width: 0; min-height: 0; }
.vp:nth-child(2), .vp:nth-child(4) { border-left: 1px solid #fff; }
.vmenu { height: 20px; flex: none; display: flex; align-items: center; gap: 12.5px; padding-left: 2px; }
.vp:nth-child(n+3) .vmenu { height: 21px; border-top: 1px solid #fff; padding-bottom: 1px; }
.pinic { margin-right: -6.500px; }
.vicons { margin-left: auto; margin-right: 2px; }
.vp:nth-child(odd) .vicons { margin-right: 5px; }
.canvas { flex: 1; overflow: hidden; border-top: 1px solid #707070; }
.canvas.active { outline: 1px solid #4a4ad8; outline-offset: -1px; border-top-color: #4a4ad8; }
.axlabel { font: 14px "Liberation Sans", Arial, sans-serif; fill: #222; }
.xl { fill: #8a1010; } .yl { fill: #0a7a0a; } .zl { fill: #1010c0; }

.submenu { height: 20px; flex: none; display: flex; align-items: center; gap: 13px; padding-left: 3px; margin-left: 1px; border-bottom: 1px solid #666; }
.matmenu { padding-left: 2px; padding-bottom: 2px; }
.matarea { flex: 1; min-height: 0; display: flex; justify-content: flex-end; border-top: 1px solid #fff; border-bottom: 1px solid #666; }
.matfoot { height: 15px; flex: none; border-top: 1px solid #fff; }

.vscroll { width: 16px; flex: none; display: flex; flex-direction: column; border-left: 1px solid #fff; }
.track { flex: 1; border-left: 1px solid #777; border-right: 1px solid #fff; }
.sb { display: block; width: 15px; height: 14px; flex: none; position: relative; background: #c0c0c0; border: 1px solid; border-color: #fff #666 #666 #fff; }
.sb::after { content: ""; position: absolute; left: 3px; top: 3px; border: 4px solid transparent; }
.sb.up::after { border-bottom: 5px solid #666; border-top: 0; }
.sb.down::after { border-top: 5px solid #666; border-bottom: 0; }
.sb.left::after { left: 3px; top: 2px; border-right: 5px solid #666; border-left: 0; }
.sb.right::after { left: 5px; top: 2px; border-left: 5px solid #666; border-right: 0; }

.rightpanel { width: 372px; flex: none; margin-left: 1px; display: flex; flex-direction: column; border-left: 1px solid #fff; position: relative; }
.tabs { height: 19px; flex: none; display: flex; align-items: flex-end; gap: 1px; padding-left: 3px; }
.tabs.low { margin-top: 2px; }
.tab { height: 17px; padding: 0 1px 0 4px; background: #c0c0c0; border-top: 2px solid #fff; border-left: 1px solid #fff; border-right: 2px solid #222; border-radius: 2px 2px 0 0; line-height: 14px; }
.tab.act { height: 18px; border-top-width: 1px; }
.tabs.low .tab { padding-right: 3px; }
.omenu { margin-left: 0; padding-left: 1px; height: 21px; border-top: 1px solid #fff; gap: 12.800px; }
.omenu .pinic { margin-right: -5px; margin-top: 1px; }
.objarea { height: 624px; flex: none; display: flex; position: relative; border-top: 1px solid #fff; }
.treewrap { flex: 1; display: flex; min-width: 0; }
.col-names { width: 114px; flex: none; border-right: 1px solid #fff; padding-top: 1px; position: relative; }
.col-flags { width: 26px; flex: none; border-right: 1px solid #fff; padding-top: 0; }
.col-tags { flex: 1; padding-top: 57px; }
.tag { margin-left: 4px; }
.row { height: 26px; position: relative; display: flex; align-items: center; }
.row span { position: absolute; top: 6px; }
.row .oi { position: absolute; left: 94px; top: 2px; }
.r1 span { left: 17px; } .r2 span { left: 31px; } .r3 span { left: 47px; }
.red { color: #f00; }
.plus { position: absolute; top: 7px; width: 9px; height: 9px; border: 1px solid #777; background: linear-gradient(#555, #555) center / 5px 1px no-repeat #c0c0c0; }
.r1 .plus { left: 3px; } .r2 .plus { left: 18px; }
.tl { position: absolute; border-left: 1px solid #777; }
.v1 { left: 7px; top: -2px; height: 9px; }
.v2 { left: 22px; top: -7px; height: 14px; }
.v3 { left: 37px; top: -7px; height: 19px; width: 7px; border-bottom: 1px solid #777; }
.flag { height: 26px; display: flex; align-items: center; gap: 3px; padding-left: 4px; }
.dots { width: 6px; height: 15px; background: radial-gradient(circle 3px at 3px 3px, #888 90%, transparent 100%), radial-gradient(circle 3px at 3px 12px, #888 90%, transparent 100%); }
.redbox { position: absolute; left: -6px; top: -10px; width: 195px; height: 106px; border: 5.500px solid #f00; }
.hscroll { height: 17px; flex: none; display: flex; width: 355px; margin-top: 2px; border: 1px solid #666; border-width: 1px 0 1px 1px; background: #c0c0c0; }
.htrack { flex: 1; border-bottom: 1px solid #fff; }
.coordhead { height: 20px; flex: none; position: relative; border-top: 1px solid #fff; border-bottom: 1px solid #666; box-shadow: 0 1px 0 #fff; }
.coordhead .pinic { position: absolute; left: 1px; top: 2px; }
.coordhead span { position: absolute; top: 2px; }
.c1 { left: 24px; } .c2 { left: 134px; } .c3 { left: 257px; }
.coordgrid { display: grid; grid-template-columns: 14px 108px 14px 110px 14px 108px; grid-template-rows: 20px 20px 20px 22px; gap: 2px 0; margin-top: 6px; }
.coordgrid label { color: #444; font-size: 12px; line-height: 20px; text-align: center; }
.num { position: relative; background: #fff; border: 2px solid; border-color: #222 #fff #fff #222; padding-left: 1px; line-height: 16px; }
.spin { position: absolute; right: 1px; top: 1px; width: 10px; height: 14px; background: linear-gradient(#000, #000) center / 10px 1px no-repeat, linear-gradient(135deg, transparent 50%, #000 50%) 1px 2px / 3px 3px no-repeat, linear-gradient(225deg, transparent 50%, #000 50%) 4px 2px / 3px 3px no-repeat, linear-gradient(45deg, transparent 50%, #000 50%) 1px 8px / 3px 3px no-repeat, linear-gradient(315deg, transparent 50%, #000 50%) 4px 8px / 3px 3px no-repeat, #c0c0c0; border: 1px solid #444; }
.lastrow { margin-top: 2px; }
.drop { position: absolute; right: 1px; top: 0; width: 16px; height: 16px; background: linear-gradient(45deg, transparent 50%, #000 50%) 3px 5px / 5px 5px no-repeat, linear-gradient(315deg, transparent 50%, #000 50%) 7px 5px / 5px 5px no-repeat, #c0c0c0; border: 1px solid; border-color: #fff #222 #222 #fff; }
.apply { text-align: center; line-height: 18px; background: #c0c0c0; border: 1px solid; border-color: #fff #222 #222 #fff; }

.timeline { height: 24px; flex: none; display: flex; align-items: flex-start; padding-left: 36px; border-top: 1px solid #666; border-bottom: 1px solid #fff; }
.tl-grip { width: 7px; height: 19px; margin: 2px 0 0 0; }
.frame-now { width: 74px; height: 16px; margin: 4px 0 0 3px; background: #00509f; border: 1px solid #666; color: #fff; text-align: center; letter-spacing: 1px; line-height: 14px; flex: none; }
.slider { width: 819px; height: 19px; margin-top: 2px; border-bottom: 1px solid #fff; border-right: 1px solid #fff; text-align: right; padding: 2px 3px 0 0; color: #777; flex: none; font-size: 12px; }
.transport { flex: 1; height: 21px; display: flex; align-items: center; padding-left: 11px; }
.tsep { width: 2px; height: 14px; margin: 0 13px; flex: none; background: linear-gradient(90deg, #777 50%, #fff 50%); }
.tsep.s2 { margin: 0 9px 0 11px; }
.mbtn { width: 18px; height: 19px; display: flex; align-items: center; justify-content: center; background: #a8a8a8; border: 1px solid; border-color: #777 #fff #fff #777; flex: none; font: bold 15px/16px "Liberation Sans", Arial, sans-serif; color: #222; }
.mini1 { margin-left: 2px; } .mini2 { margin-left: 3px; } .mini3 { margin-left: 2px; }
.statusbar { height: 15px; flex: none; padding: 1px 0 0 1px; overflow: hidden; }
```
FILE: grid.js
```js
(function () {
  var H = 1005, minor = [], major = [], k, x;
  function seg(vx, vy, crossX, crossY, list) {
    var ex = vx + (crossX - vx) * (H - vy) / (crossY - vy);
    list.push('M' + vx + ' ' + vy + 'L' + ex.toFixed(1) + ' ' + H);
  }
  for (k = -44; k <= 2; k++) {
    x = 372 + 322 * k;
    seg(1660, -30, x, 970, (k + 4) % 10 === 0 ? major : minor);
  }
  for (k = -2; k <= 34; k++) {
    x = 385 + 345 * k;
    seg(-590, -40, x, 960, (k - 4) % 10 === 0 ? major : minor);
  }
  document.getElementById('gridMinor').setAttribute('d', minor.join(''));
  document.getElementById('gridMajor').setAttribute('d', major.join(''));
})();
```
